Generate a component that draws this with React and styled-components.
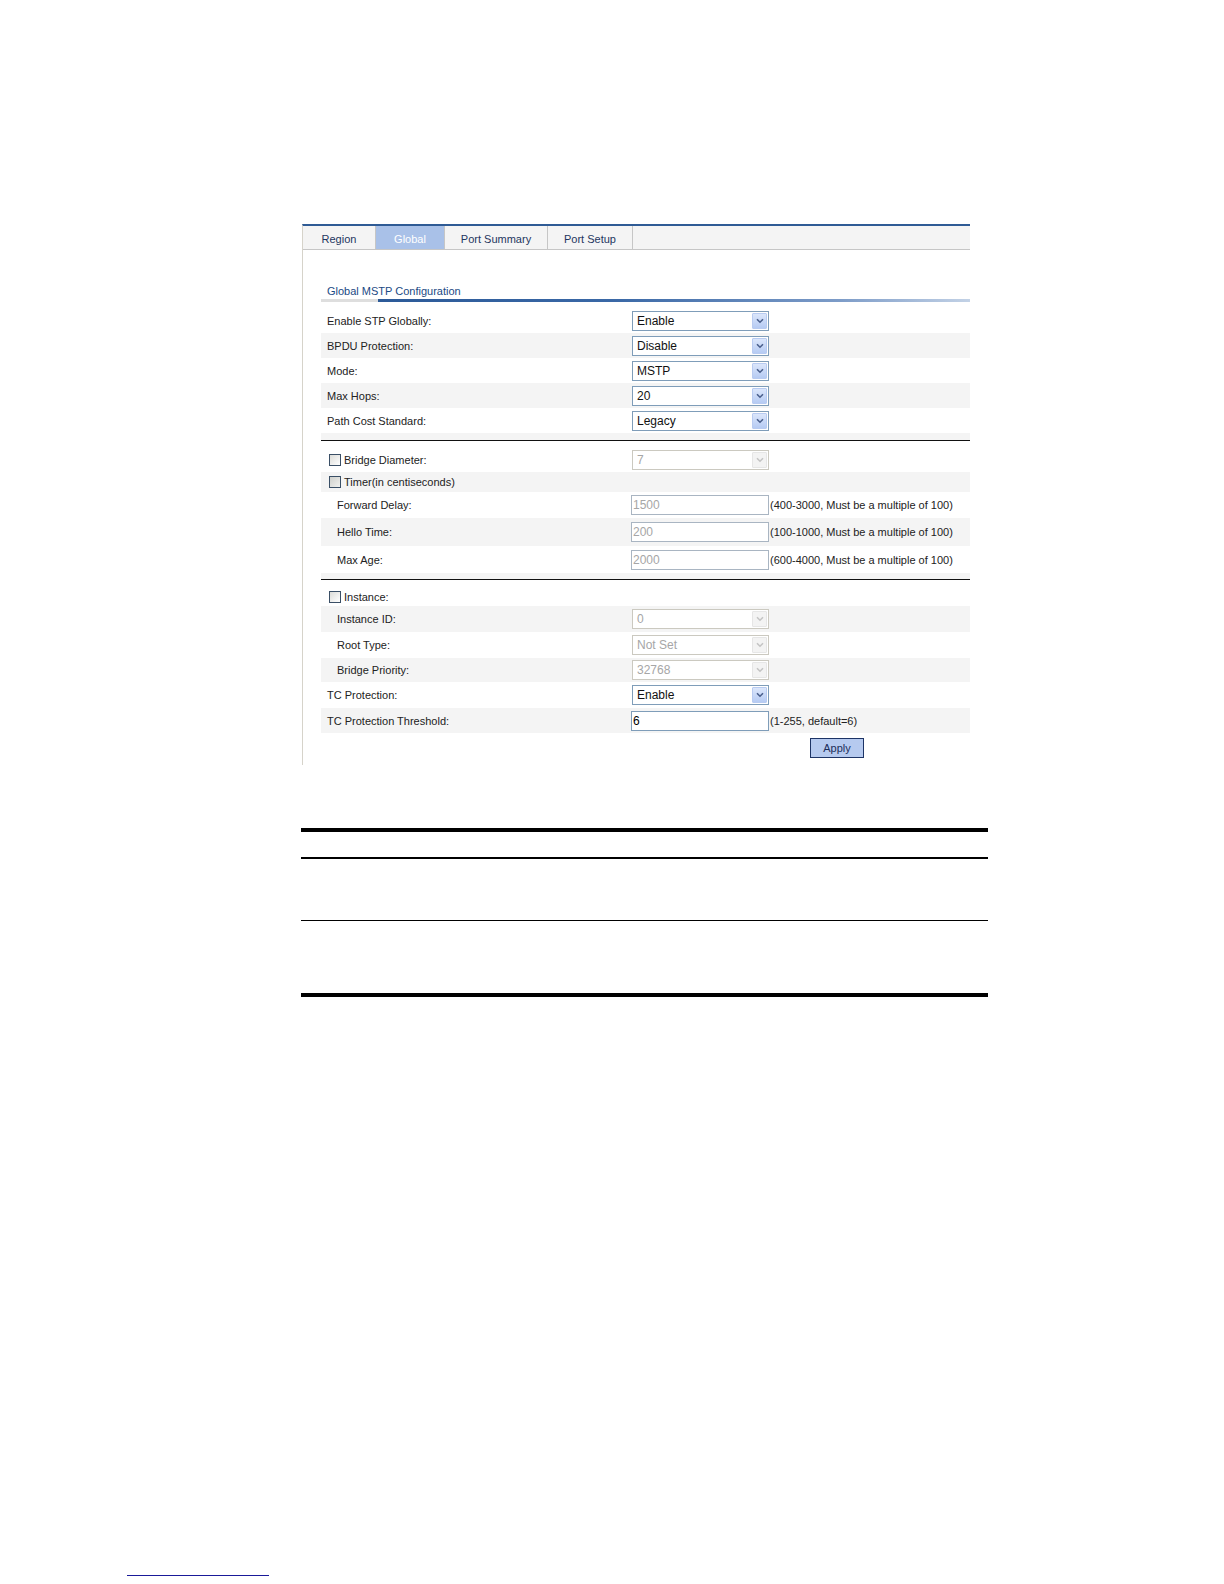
import React from "react";
import styled, { createGlobalStyle } from "styled-components";

const GlobalStyle = createGlobalStyle`
  body {
    margin: 0;
    background: #fff;
    font-family: "Liberation Sans", Arial, sans-serif;
  }
`;

const tabs = [
  { name: "Region", width: 73 },
  { name: "Global", width: 69, active: true },
  { name: "Port Summary", width: 103 },
  { name: "Port Setup", width: 85 },
];

function Arrow({ disabled }) {
  return (
    <ArrowBtn $disabled={disabled}>
      <svg width="8" height="6" viewBox="0 0 8 6">
        <path
          d="M1 1.2 L4 4.2 L7 1.2"
          fill="none"
          stroke={disabled ? "#c4c4c4" : "#4a5f8c"}
          strokeWidth="1.6"
        />
      </svg>
    </ArrowBtn>
  );
}

function Select({ value, disabled }) {
  return (
    <SelectBox $disabled={disabled}>
      <SelectText>{value}</SelectText>
      <Arrow disabled={disabled} />
    </SelectBox>
  );
}

function Check({ label, dim }) {
  return (
    <CheckLabel>
      <Box $dim={dim} />
      {label}
    </CheckLabel>
  );
}

function App() {
  return (
    <Page>
      <GlobalStyle />
      <Panel>
        <TabBar>
          {tabs.map((t) => (
            <Tab key={t.name} $w={t.width} $active={t.active}>
              {t.name}
            </Tab>
          ))}
        </TabBar>
        <Body>
          <Title>Global MSTP Configuration</Title>
          <TitleBar />

          <Row $h={25}>
            <Label>Enable STP Globally:</Label>
            <Select value="Enable" />
          </Row>
          <Row $h={25} $alt>
            <Label>BPDU Protection:</Label>
            <Select value="Disable" />
          </Row>
          <Row $h={25}>
            <Label>Mode:</Label>
            <Select value="MSTP" />
          </Row>
          <Row $h={25} $alt>
            <Label>Max Hops:</Label>
            <Select value="20" />
          </Row>
          <Row $h={25}>
            <Label>Path Cost Standard:</Label>
            <Select value="Legacy" />
          </Row>
          <Spacer $h={7} $alt />
          <Divider />
          <Spacer $h={7} />

          <Row $h={24}>
            <Check label="Bridge Diameter:" />
            <Select value="7" disabled />
          </Row>
          <Row $h={20} $alt>
            <Check label="Timer(in centiseconds)" dim />
            <span />
          </Row>
          <Row $h={26}>
            <Label $sub>Forward Delay:</Label>
            <Field>
              <Input $disabled>1500</Input>
              <Hint>(400-3000, Must be a multiple of 100)</Hint>
            </Field>
          </Row>
          <Row $h={28} $alt>
            <Label $sub>Hello Time:</Label>
            <Field>
              <Input $disabled>200</Input>
              <Hint>(100-1000, Must be a multiple of 100)</Hint>
            </Field>
          </Row>
          <Row $h={27}>
            <Label $sub>Max Age:</Label>
            <Field>
              <Input $disabled>2000</Input>
              <Hint>(600-4000, Must be a multiple of 100)</Hint>
            </Field>
          </Row>
          <Spacer $h={6} $alt />
          <Divider />
          <Spacer $h={7} />

          <Row $h={19}>
            <Check label="Instance:" />
            <span />
          </Row>
          <Row $h={26} $alt>
            <Label $sub>Instance ID:</Label>
            <Select value="0" disabled />
          </Row>
          <Row $h={26}>
            <Label $sub>Root Type:</Label>
            <Select value="Not Set" disabled />
          </Row>
          <Row $h={24} $alt>
            <Label $sub>Bridge Priority:</Label>
            <Select value="32768" disabled />
          </Row>
          <Row $h={26}>
            <Label>TC Protection:</Label>
            <Select value="Enable" />
          </Row>
          <Row $h={25} $alt>
            <Label>TC Protection Threshold:</Label>
            <Field>
              <Input>6</Input>
              <Hint>(1-255, default=6)</Hint>
            </Field>
          </Row>
          <ButtonRow>
            <ApplyButton>Apply</ApplyButton>
          </ButtonRow>
        </Body>
      </Panel>

      <RuleTable>
        <TableRow $h={25} $b={2} />
        <TableRow $h={61} $b={1} />
        <TableRow $h={72} $b={4} />
      </RuleTable>

      <FootLine />
    </Page>
  );
}

const Page = styled.div`
  width: 1224px;
  min-height: 1584px;
  padding-top: 224px;
  box-sizing: border-box;
  overflow: hidden;
`;

const Panel = styled.div`
  margin-left: 302px;
  width: 668px;
  height: 541px;
  box-sizing: border-box;
  border-left: 1px solid #d6d3ca;
  border-top: 2px solid #2f5b95;
`;

const TabBar = styled.div`
  display: flex;
  height: 23px;
  background: #f4f4f4;
  border-bottom: 1px solid #c6c6c6;
`;

const Tab = styled.div`
  width: ${(p) => p.$w}px;
  display: flex;
  align-items: center;
  justify-content: center;
  border-right: 1px solid #c6c6c6;
  font-size: 11px;
  padding-top: 2px;
  box-sizing: border-box;
  color: ${(p) => (p.$active ? "#ffffff" : "#1e3660")};
  background: ${(p) => (p.$active ? "#a9c1e8" : "transparent")};
`;

const Body = styled.div`
  padding: 35px 0 0 18px;
`;

const Title = styled.div`
  font-size: 11px;
  line-height: 13px;
  color: #1b4a84;
  padding-left: 6px;
`;

const TitleBar = styled.div`
  height: 3px;
  margin: 1px 0 6px;
  background: linear-gradient(
    to right,
    #dedede 0,
    #dedede 57px,
    #2c5a98 57px,
    #3a68a6 45%,
    #7d9cc8 80%,
    #c3d2e6 100%
  );
`;

const Row = styled.div`
  display: grid;
  grid-template-columns: 311px 1fr;
  align-items: center;
  height: ${(p) => p.$h}px;
  background: ${(p) => (p.$alt ? "#f4f4f4" : "#ffffff")};
`;

const Spacer = styled.div`
  height: ${(p) => p.$h}px;
  background: ${(p) => (p.$alt ? "#f4f4f4" : "#ffffff")};
`;

const Divider = styled.div`
  height: 1px;
  background: #111;
`;

const Label = styled.div`
  font-size: 11px;
  color: #222;
  padding-left: ${(p) => (p.$sub ? 16 : 6)}px;
`;

const CheckLabel = styled.div`
  display: flex;
  align-items: center;
  gap: 3px;
  padding-left: 8px;
  font-size: 11px;
  color: #222;
`;

const Box = styled.span`
  width: 12px;
  height: 12px;
  box-sizing: border-box;
  border: 1px solid #3a4f66;
  background: ${(p) =>
    p.$dim
      ? "linear-gradient(135deg, #cfd0cc, #f1f1ee)"
      : "linear-gradient(135deg, #dcdcd8, #ffffff)"};
`;

const SelectBox = styled.div`
  width: 137px;
  height: 20px;
  box-sizing: border-box;
  display: flex;
  align-items: center;
  justify-content: space-between;
  border: 1px solid ${(p) => (p.$disabled ? "#cbc9c0" : "#7f9db9")};
  background: #fff;
  color: ${(p) => (p.$disabled ? "#a6a6a6" : "#111")};
  font-size: 12px;
`;

const SelectText = styled.span`
  padding-left: 4px;
`;

const ArrowBtn = styled.span`
  width: 15px;
  height: 16px;
  margin-right: 1px;
  box-sizing: border-box;
  display: flex;
  align-items: center;
  justify-content: center;
  border: 1px solid ${(p) => (p.$disabled ? "#e6e6e6" : "#b8cbf1")};
  border-radius: 1px;
  background: ${(p) =>
    p.$disabled
      ? "#f3f3f3"
      : "linear-gradient(to bottom, #dbe6fb, #b6cbf3)"};
`;

const Field = styled.div`
  display: flex;
  align-items: center;
  margin-left: -1px;
`;

const Input = styled.div`
  width: 138px;
  height: 20px;
  box-sizing: border-box;
  border: 1px solid ${(p) => (p.$disabled ? "#a9b5c2" : "#7f9db9")};
  background: #fff;
  color: ${(p) => (p.$disabled ? "#a6a6a6" : "#000")};
  font-size: 12px;
  line-height: 18px;
  padding-left: 1px;
`;

const Hint = styled.span`
  font-size: 11px;
  color: #222;
  margin-left: 1px;
`;

const ButtonRow = styled.div`
  padding: 5px 0 0 489px;
`;

const ApplyButton = styled.div`
  width: 54px;
  height: 20px;
  box-sizing: border-box;
  border: 1px solid #1d3466;
  background: #b6caef;
  color: #1c2e5a;
  font-size: 11px;
  display: flex;
  align-items: center;
  justify-content: center;
`;

const RuleTable = styled.div`
  margin: 63px 0 0 301px;
  width: 687px;
  border-top: 4px solid #000;
`;

const TableRow = styled.div`
  height: ${(p) => p.$h}px;
  border-bottom: ${(p) => p.$b}px solid #000;
`;

const FootLine = styled.div`
  margin: 578px 0 0 127px;
  width: 142px;
  height: 1px;
  background: #1a1a99;
`;

export default App;
